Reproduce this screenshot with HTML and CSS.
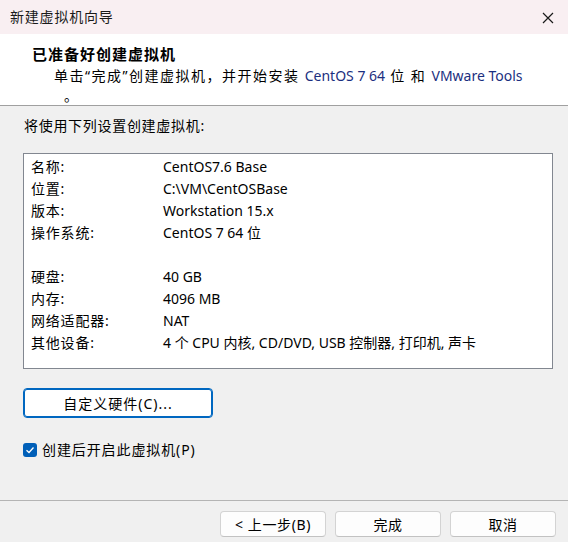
FILE: index.html
```html
<!DOCTYPE html>
<html lang="zh-CN">
<head>
  <meta charset="UTF-8" />
  <title>新建虚拟机向导</title>
  <link rel="stylesheet" href="styles.css">
</head>
<body>
  <div class="window">
    <div class="titlebar">
      <span class="title">新建虚拟机向导</span>
      <span class="close">
        <svg width="12" height="12" viewBox="0 0 12 12"><path d="M1 1 L11 11 M11 1 L1 11" stroke="#1a1a1a" stroke-width="1.2" fill="none"/></svg>
      </span>
    </div>

    <div class="header">
      <h1>已准备好创建虚拟机</h1>
      <p>单击“完成”创建虚拟机，并开始安装 <span class="hl">CentOS 7 64</span> 位 和 <span class="hl">VMware Tools</span><br><span class="stop">。</span></p>
    </div>

    <div class="content">
      <div class="intro">将使用下列设置创建虚拟机:</div>
      <div class="summary">
        <div class="row"><span class="key">名称:</span><span>CentOS7.6 Base</span></div>
        <div class="row"><span class="key">位置:</span><span>C:\VM\CentOSBase</span></div>
        <div class="row"><span class="key">版本:</span><span>Workstation 15.x</span></div>
        <div class="row"><span class="key">操作系统:</span><span>CentOS 7 64 位</span></div>
        <div class="row"></div>
        <div class="row"><span class="key">硬盘:</span><span>40 GB</span></div>
        <div class="row"><span class="key">内存:</span><span>4096 MB</span></div>
        <div class="row"><span class="key">网络适配器:</span><span>NAT</span></div>
        <div class="row"><span class="key">其他设备:</span><span>4 个 CPU 内核, CD/DVD, USB 控制器, 打印机, 声卡</span></div>
      </div>
      <button class="btn btn-accent">自定义硬件(C)...</button>
      <label class="check">
        <span class="box">
          <svg width="10" height="10" viewBox="0 0 10 10"><path d="M1.5 5.2 L4 7.5 L8.5 2.5" stroke="#fff" stroke-width="1.3" fill="none"/></svg>
        </span>
        <span class="check-text">创建后开启此虚拟机(P)</span>
      </label>
    </div>

    <div class="footer">
      <button class="btn">&lt; 上一步(B)</button>
      <button class="btn">完成</button>
      <button class="btn">取消</button>
    </div>
  </div>
</body>
</html>
```

FILE: styles.css
```css
body {
  margin: 0;
  font-family: "Noto Sans", "Noto Sans CJK SC", sans-serif;
  font-size: 14px;
  color: #000;
  background: #f0f0f0;
}

.window {
  width: 568px;
  height: 542px;
  display: flex;
  flex-direction: column;
  background: #f0f0f0;
}

.titlebar {
  height: 34px;
  display: flex;
  align-items: center;
  justify-content: space-between;
  padding: 0 14px 0 10px;
  background: #f9eff2;
  font-size: 14px;
  letter-spacing: 0.8px;
  line-height: 18px;
  color: #1a1a1a;
}

.close {
  display: flex;
  padding-top: 1px;
}

.header {
  height: 72px;
  box-sizing: border-box;
  padding: 10px 0 0 32px;
  background: #fff;
  border-bottom: 1px solid #a0a0a0;
}

.header h1 {
  margin: 0;
  font-size: 15px;
  font-weight: bold;
  letter-spacing: 1px;
  line-height: 20px;
}

.header p {
  margin: 2px 0 0 22px;
  line-height: 20px;
  letter-spacing: 1.5px;
}

.hl {
  color: #1b2f80;
  letter-spacing: 0;
}

.stop {
  margin-left: 10px;
}

.content {
  flex: 1;
  padding: 10px 15px 0 23px;
}

.intro {
  line-height: 20px;
  padding-left: 1px;
  letter-spacing: 0.7px;
}

.summary {
  margin-top: 17px;
  width: 530px;
  height: 216px;
  box-sizing: border-box;
  border: 1px solid #828790;
  background: #fff;
  padding: 2px 7px 0;
}

.row {
  display: flex;
  height: 22px;
  line-height: 22px;
}

.key {
  width: 132px;
  letter-spacing: 0.8px;
}

.btn {
  font-family: inherit;
  font-size: 14px;
  letter-spacing: 0.6px;
  color: #000;
  background: #fdfdfd;
  border: 1px solid #d3d3d3;
  border-bottom-color: #c2c2c2;
  border-radius: 4px;
  padding: 0;
  height: 26px;
  width: 106px;
}

.btn-accent {
  display: block;
  margin-top: 19px;
  width: 190px;
  height: 30px;
  background: #fff;
  border: 1px solid #0067c0;
  box-shadow: inset 0 0 0 1px #0067c0;
  letter-spacing: 1px;
}

.check {
  display: flex;
  align-items: center;
  gap: 5px;
  margin-top: 24px;
  line-height: 16px;
}

.check-text {
  letter-spacing: 0.9px;
}

.check .box {
  width: 14px;
  height: 14px;
  border-radius: 3px;
  background: #005fb8;
  display: flex;
  align-items: center;
  justify-content: center;
}

.footer {
  height: 42px;
  box-sizing: border-box;
  border-top: 1px solid #b4b4b4;
  display: flex;
  justify-content: flex-end;
  gap: 9px;
  padding: 10px 12px 0 0;
}
```
